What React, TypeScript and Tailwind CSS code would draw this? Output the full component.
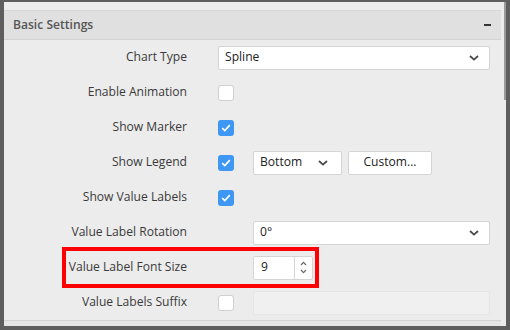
import React from 'react';

const font = { fontFamily: '"Open Sans", "Noto Sans", Arial, sans-serif' };

const Chevron = ({ className = '' }: { className?: string }) => (
  <svg width="10" height="6" viewBox="0 0 10 6" className={className}>
    <path d="M1 1l4 3.6L9 1" fill="none" stroke="#4a4a4a" strokeWidth="1.8" />
  </svg>
);

const Checkbox = ({ checked }: { checked?: boolean }) =>
  checked ? (
    <div className="w-4 h-4 rounded-[3px] bg-[#3d97f3] flex items-center justify-center">
      <svg width="10" height="8" viewBox="0 0 10 8">
        <path d="M1.2 4.2l2.6 2.4L8.8 1.2" fill="none" stroke="#fff" strokeWidth="1.7" />
      </svg>
    </div>
  ) : (
    <div className="w-4 h-4 rounded-[3px] bg-white border border-[#cfcfcf]" />
  );

const Row = ({ label, children }: { label: React.ReactNode; children?: React.ReactNode }) => (
  <div className="h-[35px] flex items-center">
    <div className="w-[183px] text-right text-[12.1px] text-[#3a3a3a] shrink-0">{label}</div>
    <div className="ml-[31px] w-[272px] flex items-center">{children}</div>
  </div>
);

export default function App() {
  return (
    <div className="w-[510px] h-[330px] bg-[#5e5e5e] pt-[2px] px-[4px] pb-[4px]" style={font}>
      <div className="h-full flex bg-[#ececec]">
        <div className="w-[497px] flex flex-col">
          <div className="h-[9px] border-b border-[#d6d6d6]" />
          <div className="h-[29px] bg-[#e0e0e0] border-b border-[#d3d3d3] flex items-center justify-between pl-[9px] pr-[10px]">
            <span className="text-[12.1px] font-semibold text-[#555]">Basic Settings</span>
            <span className="w-[7px] h-[2px] bg-[#333]" />
          </div>
          <Row label="Chart Type">
            <div className="w-full h-[24px] bg-white border border-[#d4d4d4] rounded-[2px] flex items-center justify-between pl-[6px] pr-[10px] text-[12.1px] text-[#222]">
              <span>Spline</span>
              <Chevron />
            </div>
          </Row>
          <Row label="Enable Animation">
            <Checkbox />
          </Row>
          <Row label="Show Marker">
            <Checkbox checked />
          </Row>
          <Row label="Show Legend">
            <Checkbox checked />
            <div className="ml-[19px] w-[89px] h-[24px] bg-white border border-[#d4d4d4] rounded-[2px] flex items-center justify-between pl-[6px] pr-[13px] text-[12.1px] text-[#222]">
              <span>Bottom</span>
              <Chevron />
            </div>
            <div className="ml-[6px] w-[84px] h-[24px] bg-white border border-[#d4d4d4] rounded-[2px] flex items-center justify-center text-[12.1px] text-[#222]">
              Custom...
            </div>
          </Row>
          <Row label="Show Value Labels">
            <Checkbox checked />
          </Row>
          <Row label="Value Label Rotation">
            <div className="ml-[35px] w-[237px] h-[24px] bg-white border border-[#d4d4d4] rounded-[2px] flex items-center justify-between pl-[6px] pr-[10px] text-[12.1px] text-[#222]">
              <span>0°</span>
              <Chevron />
            </div>
          </Row>
          <div className="relative">
            <div className="absolute left-[58px] top-[-3px] w-[257px] h-[41px] border-4 border-[#ff0000]" />
            <Row label="Value Label Font Size">
              <div className="ml-[35px] w-[60px] h-[24px] bg-white border border-[#d4d4d4] rounded-[2px] flex text-[12.1px] text-[#222]">
                <div className="w-[40px] pl-[7px] flex items-center">9</div>
                <div className="flex-1 border-l border-[#d4d4d4] flex flex-col items-center justify-center gap-[3px]">
                  <svg width="7" height="5" viewBox="0 0 7 5">
                    <path d="M1 4l2.5-2.6L6 4" fill="none" stroke="#666" strokeWidth="1.1" />
                  </svg>
                  <svg width="7" height="5" viewBox="0 0 7 5">
                    <path d="M1 1l2.5 2.6L6 1" fill="none" stroke="#666" strokeWidth="1.1" />
                  </svg>
                </div>
              </div>
            </Row>
          </div>
          <Row label="Value Labels Suffix">
            <Checkbox />
            <div className="ml-[19px] w-[237px] h-[24px] bg-[#f0f0f0] border border-[#e6e6e6] rounded-[2px]" />
          </Row>
          <div className="flex-1 border-t border-[#d2d2d2] bg-[#e6e6e6]" />
        </div>
        <div className="w-[5px] flex justify-end">
          <div className="w-[2px] h-[98px] bg-[#9a9a9a]" />
        </div>
      </div>
    </div>
  );
}
